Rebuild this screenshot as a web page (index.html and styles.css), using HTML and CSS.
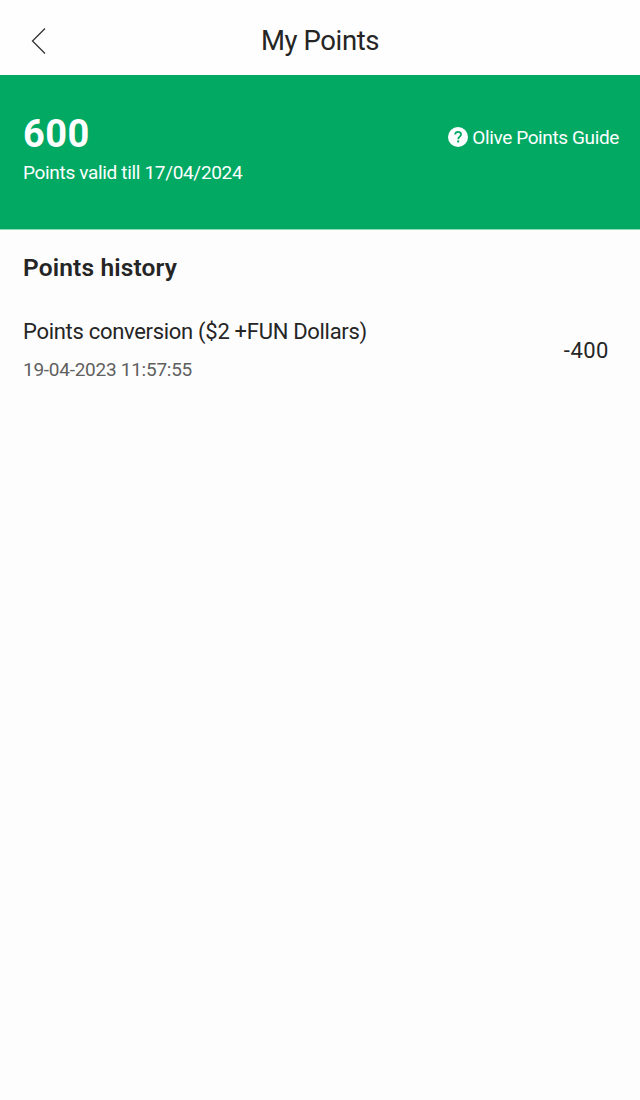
FILE: index.html
```html
<!DOCTYPE html>
<html lang="en">
<head>
  <meta charset="UTF-8">
  <meta name="viewport" content="width=device-width, initial-scale=1.0">
  <title>My Points</title>
  <link rel="stylesheet" href="styles.css">
</head>
<body>
  <header class="topbar">
    <a class="back" href="#" aria-label="Back">
      <svg width="16" height="28" viewBox="0 0 16 28" fill="none" stroke="#333" stroke-width="1.3">
        <path d="M14 1.5L1.5 14L14 26.5"/>
      </svg>
    </a>
    <h1 class="title">My Points</h1>
  </header>

  <section class="summary">
    <div>
      <div class="balance">600</div>
      <div class="validity">Points valid till 17/04/2024</div>
    </div>
    <a class="guide" href="#">
      <svg class="guide-icon" width="20" height="20" viewBox="0 0 20 20" fill="none">
        <circle cx="10" cy="10" r="10" fill="#fff"/>
        <path d="M7.2 7.6C7.2 5.8 8.4 4.8 10.1 4.8S13 5.8 13 7.4C13 9.6 10.2 9.8 10.2 12.2" stroke="#02a963" stroke-width="1.8"/>
        <rect x="9.2" y="13.4" width="2" height="2.1" fill="#02a963"/>
      </svg>
      <span class="guide-text">Olive Points Guide</span>
    </a>
  </section>

  <main class="history">
    <h2 class="history-title">Points history</h2>
    <div class="entry">
      <div>
        <div class="entry-name">Points conversion ($2 +FUN Dollars)</div>
        <div class="entry-date">19-04-2023 11:57:55</div>
      </div>
      <div class="entry-points">-400</div>
    </div>
  </main>
</body>
</html>
```
FILE: styles.css
```css
* {
  box-sizing: border-box;
}
body {
  margin: 0;
  min-height: 1100px;
  font-family: Roboto, "Liberation Sans", sans-serif;
  background-color: #fdfdfd;
  color: #252525;
}
a {
  color: inherit;
  text-decoration: none;
}
.topbar {
  display: grid;
  grid-template-columns: 60px 1fr 60px;
  align-items: center;
  height: 75px;
  padding-top: 7px;
  background-color: #fefefe;
}
.back {
  display: flex;
  padding-left: 31px;
}
.title {
  margin: 0;
  text-align: center;
  font-size: 27.5px;
  line-height: 32px;
  font-weight: 400;
  letter-spacing: -0.4px;
}
.summary {
  display: flex;
  justify-content: space-between;
  align-items: flex-start;
  height: 155px;
  padding: 39px 21px 0 23px;
  background-color: #02a963;
  border-bottom: 1px solid #8fd9b8;
  color: #fff;
}
.balance {
  font-size: 38px;
  line-height: 40px;
  font-weight: 700;
  letter-spacing: 0.4px;
}
.validity {
  margin-top: 7px;
  font-size: 19px;
  line-height: 24px;
  letter-spacing: -0.33px;
}
.guide {
  display: flex;
  align-items: flex-start;
  gap: 4px;
  margin-top: 13px;
  font-size: 19px;
  line-height: 22px;
  letter-spacing: -0.38px;
}
.history {
  padding: 22px 31px 0 23px;
}
.history-title {
  margin: 0;
  font-size: 24.5px;
  line-height: 32px;
  font-weight: 600;
  letter-spacing: 0.14px;
}
.entry {
  display: flex;
  justify-content: space-between;
  align-items: center;
  margin-top: 34px;
}
.entry-name {
  font-size: 22px;
  line-height: 28px;
  letter-spacing: -0.3px;
}
.entry-date {
  margin-top: 12px;
  font-size: 19px;
  line-height: 24px;
  letter-spacing: -0.26px;
  color: #606060;
}
.entry-points {
  padding-top: 2px;
  font-size: 22px;
  line-height: 26px;
  letter-spacing: 0.5px;
}
```
